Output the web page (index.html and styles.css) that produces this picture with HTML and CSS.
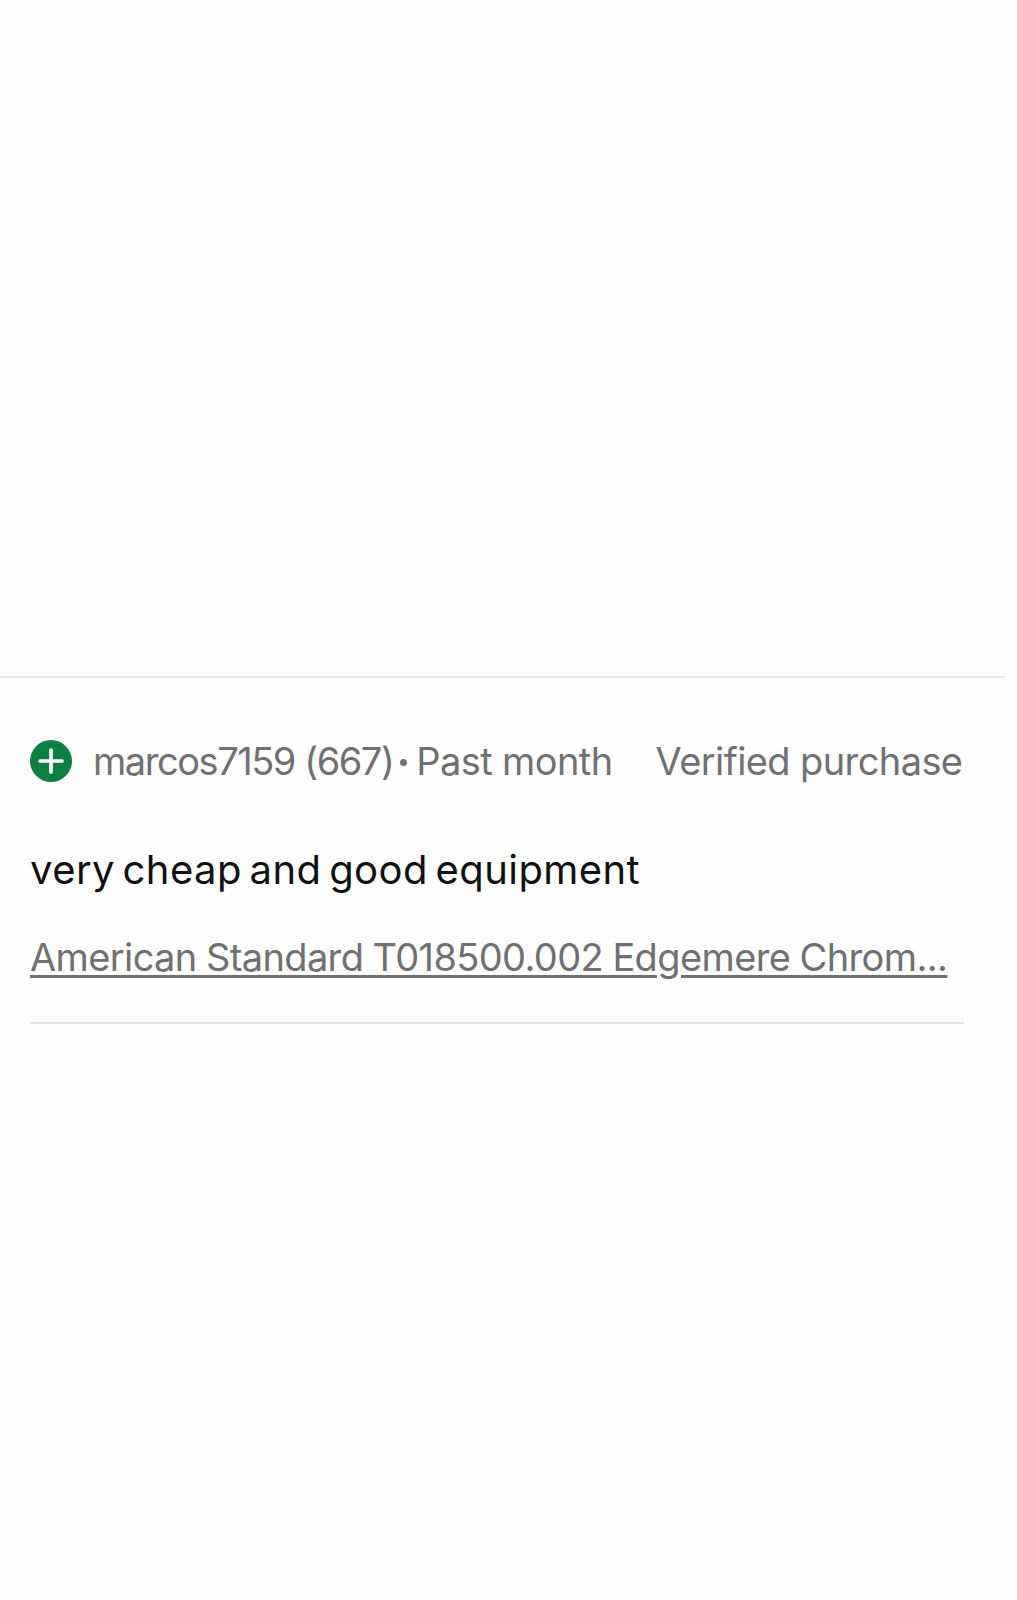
FILE: index.html
```html
<!DOCTYPE html>
<html lang="en">
<head>
<meta charset="utf-8">
<title>Review</title>
<link rel="stylesheet" href="styles.css">
</head>
<body>
<main class="page">
  <section class="review">
    <div class="meta">
      <svg class="badge" viewBox="0 0 42 42" aria-hidden="true">
        <circle cx="21" cy="21" r="21" fill="#0b8043"/>
        <path d="M21 10v22M10 21h22" stroke="#fff" stroke-width="3.7" stroke-linecap="round" fill="none"/>
      </svg>
      <span class="who">marcos7159 (667)</span>
      <span class="dot"></span>
      <span class="when">Past month</span>
      <span class="verified">Verified purchase</span>
    </div>
    <p class="body">very cheap and good equipment</p>
    <a class="item" href="#">American Standard T018500.002 Edgemere Chrom...</a>
    <div class="rule"></div>
  </section>
</main>
</body>
</html>
```
FILE: styles.css
```css
html, body { margin: 0; background: #fefefe; }
body { font-family: Inter, "Noto Sans", sans-serif; height: 1600px; overflow: hidden; }
.page { width: 1005px; padding-top: 676px; }
.review { border-top: 2px solid #e8e8e8; padding: 62px 41px 0 30px; }
.meta { display: flex; align-items: center; height: 42px; color: #707070; font-size: 38px; letter-spacing: -0.6px; white-space: nowrap; }
.badge { width: 42px; height: 42px; flex: none; margin-right: 21px; }
.who { letter-spacing: -1.45px; }
.dot { width: 7px; height: 7px; border-radius: 50%; background: #707070; margin: 3px 9px 0 7px; flex: none; }
.verified { margin-left: 43px; }
.body { margin: 65px 0 0; color: #111; font-size: 40px; font-weight: 430; line-height: 46px; letter-spacing: 0.43px; word-spacing: -4px; }
.item { display: block; margin-top: 41px; color: #707070; font-size: 38px; line-height: 46px; letter-spacing: -0.62px; word-spacing: -0.8px; text-decoration: underline; text-decoration-thickness: 3px; text-underline-offset: 4px; white-space: nowrap; }
.rule { height: 2px; background: #e2e2e2; margin-top: 42px; }
```
